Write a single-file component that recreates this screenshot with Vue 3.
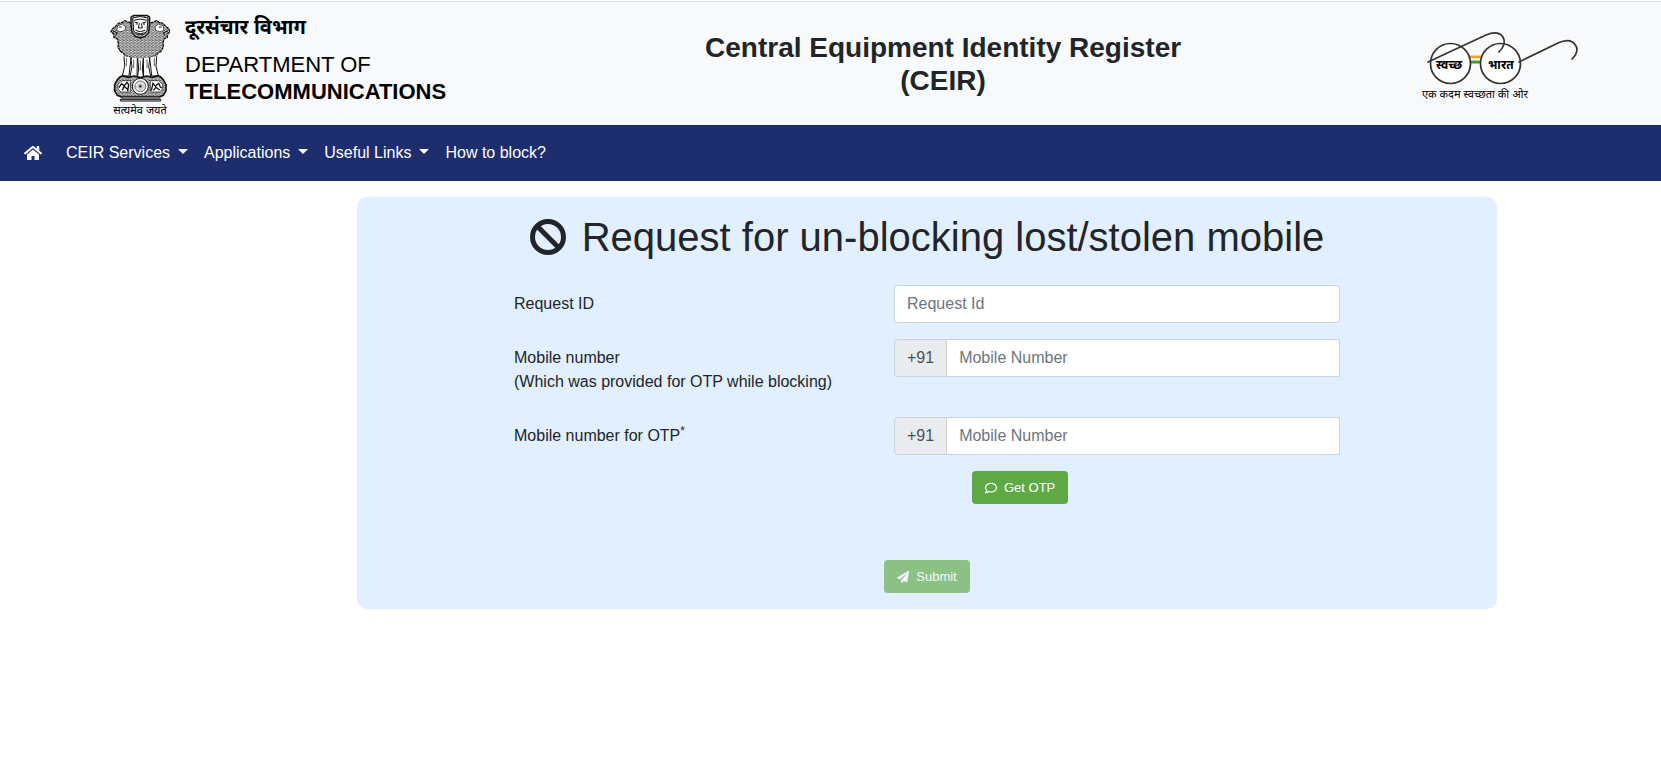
<template>
  <div class="page">
    <header class="masthead">
      <div class="brand">
        <div class="emblem">
          <svg class="emblem-art" viewBox="30 24 180 264" aria-hidden="true">
            <defs>
              <pattern id="fur" width="11" height="10" patternUnits="userSpaceOnUse">
                <rect width="11" height="10" fill="#fff" />
                <path d="M0 1l5 4l6-4M0 6l5 4l6-4M3 0v4" fill="none" stroke="#111" stroke-width="2" />
              </pattern>
            </defs>
            <g fill="url(#fur)" stroke="#111" stroke-width="4" stroke-linejoin="round">
              <path d="M91 50l-10-3l-7-3l-7 5l-12 3l-8 9l-9 7l-5 9l8 7l1 10l10 5l3 12l-1 12l7 13l9 5l6 9l15 3l12 6h38l12-6l15-3l6-9l9-5l7-13l-1-12l3-12l10-5l1-10l8-7l-5-9l-9-7l-8-9l-12-3l-7-5l-7 3l-8 3z" stroke-dasharray="9 2" />
              <path d="M93 33l8-5h40l8 5v22l-3 25l-10 11l-15 5l-15-5l-10-11l-3-25z" />
            </g>
            <g fill="#fff" stroke="#111" stroke-width="3">
              <path d="M98 36q22-9 46 0l-3 38l-9 11h-22l-9-11z" />
              <path d="M53 59l14-5l10 8l-2 11l-12 4l-13-3zM189 59l-14-5l-10 8l2 11l12 4l13-3z" stroke-width="2" />
              <path d="M72 151l2 30l-7 29h20l3-30l4-27M170 151l-2 30l7 29h-20l-3-30l-4-27M92 154l4 28l-7 34h22l1-59M150 154l-4 28l7 34h-22l-1-59M113 157l3 32l-5 31h20l-4-31l3-32" />
            </g>
            <g fill="none" stroke="#111" stroke-width="3">
              <path d="M103 48l12 3M139 48l-12 3M107 54h6M129 54h6M118 52l-3 14h12l-3-14M106 73q15 8 30 0M108 80q13 7 26 0M101 43q20-8 40 0M57 63h8M185 63h-8M38 75l14 5l-5 9M204 75l-14 5l5 9" />
              <path d="M79 156v24M101 160v26M141 160v26M163 156v24M121 163v30" stroke-width="2" />
            </g>
            <path d="M60 213l8-4l17 5l17-4l19 5l19-5l17 4l17-5l8 4l8 8l8 15v18l-8 14l-12 5H65l-13-5l-8-14v-18l8-15z" fill="url(#fur)" stroke="#111" stroke-width="5" />
            <path d="M66 224h25v34H63l-9-9v-15zM176 224h-25v34h28l9-9v-15z" fill="#fff" stroke="#111" stroke-width="2" />
            <path d="M57 245l7-11l9 5l8-10l5 7l-3 20M67 253l5-12l11 9M154 254l5-22l7 9l10-9l5 11l5 3M160 253l8-9l11 8" fill="none" stroke="#111" stroke-width="4" />
            <circle cx="121" cy="241" r="24" fill="#fff" stroke="#111" stroke-width="3" />
            <circle cx="121" cy="241" r="16" fill="none" stroke="#333" stroke-width="2" />
            <path d="M121 223v36M103 241h36M108 228l26 26M134 228l-26 26M114 224l14 34M128 224l-14 34M104 234l34 14M104 248l34-14" stroke="#555" stroke-width="1" />
            <circle cx="121" cy="241" r="3" fill="#111" />
            <path d="M64 271h115v5H64zM61 280h121v5H61z" fill="#ddd" stroke="#111" stroke-width="3" />
          </svg>
          <span class="emblem-motto" lang="hi">सत्यमेव जयते</span>
        </div>
        <div class="brand-text">
          <span class="brand-hindi" lang="hi">दूरसंचार विभाग</span>
          <span>DEPARTMENT OF</span>
          <strong>TELECOMMUNICATIONS</strong>
        </div>
      </div>

      <h2 class="title">Central Equipment Identity Register<br />(CEIR)</h2>

      <svg class="swachh" viewBox="0 -15 158 74" role="img" aria-label="स्वच्छ भारत">
        <path d="M50 15h11" stroke="#e9a52f" stroke-width="3" />
        <path d="M50 17.500h11" stroke="#fff" stroke-width="2" />
        <path d="M50 20h11" stroke="#4d9b36" stroke-width="3" />
        <g fill="#fff" stroke="#333" stroke-width="1.700">
          <circle cx="30.500" cy="21.500" r="20" />
          <circle cx="80.500" cy="21.500" r="20" />
        </g>
        <g fill="none" stroke="#333" stroke-width="1.700" stroke-linecap="round">
          <path d="M8 20L66 -7Q78 -12 83 -5Q87 2 79 10" />
          <path d="M99 20L138 1Q151 -5 156 4Q159 10 152 17" />
        </g>
        <text x="16" y="27" class="lens" lang="hi">स्वच्छ</text>
        <text x="68" y="27" class="lens" lang="hi">भारत</text>
        <text x="2" y="56" class="slogan" lang="hi">एक कदम स्वच्छता की ओर</text>
      </svg>
    </header>

    <nav class="navbar">
      <a href="#" class="nav-link home" aria-label="Home">
        <svg viewBox="0 0 576 512" aria-hidden="true">
          <path d="M280.400 148.300L96 300.100V464a16 16 0 0 0 16 16l112-.300a16 16 0 0 0 16-16V368a16 16 0 0 1 16-16h64a16 16 0 0 1 16 16v95.600a16 16 0 0 0 16 16.100L464 480a16 16 0 0 0 16-16V300L295.700 148.300a12.200 12.200 0 0 0-15.300 0zM571.600 251.500L488 182.600V44.100a12 12 0 0 0-12-12h-56a12 12 0 0 0-12 12v72.600L318.500 43a48 48 0 0 0-61 0L4.300 251.500a12 12 0 0 0-1.600 16.900l25.500 31a12 12 0 0 0 16.900 1.600L280.400 107.200a12.200 12.200 0 0 1 15.300 0l235.200 193.700a12 12 0 0 0 16.900-1.600l25.500-31a12 12 0 0 0-1.700-16.800z" />
        </svg>
      </a>
      <a v-for="item in navItems" :key="item.label" href="#" class="nav-link">
        {{ item.label }}<span v-if="item.dropdown" class="caret"></span>
      </a>
    </nav>

    <main>
      <form class="card" @submit.prevent>
        <h1>
          <svg viewBox="0 0 36 36" aria-hidden="true">
            <circle cx="18" cy="18" r="15.500" />
            <path d="M7.500 7.500l21 21" />
          </svg>
          Request for un-blocking lost/stolen mobile
        </h1>

        <div class="fields">
          <label for="request-id">Request ID</label>
          <div class="group">
            <input id="request-id" v-model="requestId" type="text" class="rounded" placeholder="Request Id" />
          </div>

          <label for="mobile">Mobile number<br />(Which was provided for OTP while blocking)</label>
          <div class="group">
            <span class="prefix">+91</span>
            <input id="mobile" v-model="mobile" type="tel" placeholder="Mobile Number" />
          </div>

          <label for="otp-mobile">Mobile number for OTP<sup>*</sup></label>
          <div class="group">
            <span class="prefix">+91</span>
            <input id="otp-mobile" v-model="otpMobile" type="tel" placeholder="Mobile Number" />
          </div>

          <button type="button" class="btn otp">
            <svg viewBox="0 0 512 512" aria-hidden="true">
              <path d="M256 32C114.600 32 0 125.100 0 240c0 47.600 19.900 91.200 52.900 126.300C38 405.700 7 439.100 6.500 439.500c-6.600 7-8.400 17.200-4.600 26S14.400 480 24 480c61.500 0 110-25.700 139.100-46.300C192 442.800 223.200 448 256 448c141.400 0 256-93.100 256-208S397.400 32 256 32zm0 368c-26.700 0-53.100-4.100-78.400-12.100l-22.700-7.200-19.500 13.800c-14.300 10.100-33.900 21.400-57.500 29 7.300-12.100 14.400-25.700 19.900-40.200l10.600-28.100-20.600-21.800C69.700 314.100 48 282.200 48 240c0-88.200 93.300-160 208-160s208 71.800 208 160-93.300 160-208 160z" />
            </svg>
            Get OTP
          </button>
        </div>

        <button type="submit" class="btn" disabled>
          <svg viewBox="0 0 512 512" aria-hidden="true">
            <path d="M476 3.200L12.500 270.600c-18.100 10.400-15.800 35.600 2.200 43.200L121 358.400l287.300-253.200c5.500-4.900 13.300 2.600 8.600 8.300L176 407v80.500c0 23.600 28.500 32.900 42.500 15.800L282 426l124.600 52.200c14.200 6 30.400-2.900 33-18.200l72-432C515 7.800 493.300-6.800 476 3.200z" />
          </svg>
          Submit
        </button>
      </form>
    </main>
  </div>
</template>

<script setup>
import { ref } from 'vue'

const navItems = [
  { label: 'CEIR Services', dropdown: true },
  { label: 'Applications', dropdown: true },
  { label: 'Useful Links', dropdown: true },
  { label: 'How to block?', dropdown: false }
]

const requestId = ref('')
const mobile = ref('')
const otpMobile = ref('')
</script>

<style>
body {
  margin: 0;
  background: #fff;
}
</style>

<style scoped>
.page {
  padding-top: 1px;
  font-family: "Liberation Sans", Arial, "Noto Sans Devanagari", "Noto Sans", sans-serif;
  font-size: 16px;
  line-height: 24px;
  color: #212529;
}

*,
*::before {
  box-sizing: border-box;
}

.masthead {
  display: flex;
  align-items: center;
  justify-content: space-between;
  min-height: 124px;
  padding: 0 83px 0 110px;
  border-top: 1px solid #dee2e6;
  background: #f8f9fb;
}

.brand {
  display: flex;
  align-items: center;
  gap: 15px;
  color: #000;
}

.emblem {
  display: flex;
  flex-direction: column;
  align-items: center;
  width: 60px;
  padding-top: 4px;
}

.emblem-art {
  width: 60px;
  height: 88px;
}

.emblem-motto {
  font-size: 11px;
  line-height: 16px;
  white-space: nowrap;
}

.brand-text {
  display: flex;
  flex-direction: column;
  padding-bottom: 8px;
  font-size: 22px;
  line-height: 27px;
}

.brand-hindi {
  margin-bottom: 10px;
  font-size: 20px;
  font-weight: 700;
}

.title {
  margin: 0;
  padding-left: 20px;
  font-size: 28px;
  line-height: 33px;
  text-align: center;
}

.swachh {
  width: 158px;
  height: 74px;
}

.lens {
  font-size: 12px;
  font-weight: 700;
}

.slogan {
  font-size: 11px;
}

.navbar {
  display: flex;
  align-items: center;
  min-height: 56px;
  padding: 0 16px;
  background: #1d2d6e;
}

.nav-link {
  display: flex;
  align-items: center;
  padding: 8px;
  color: #fff;
  text-decoration: none;
}

.home {
  margin-right: 8px;
}

.home svg {
  width: 18px;
  height: 16px;
  fill: #fff;
}

.caret {
  margin: 0 0 3px 8px;
  border: 5px solid transparent;
  border-top-color: #fff;
  border-bottom: 0;
}

main {
  padding: 16px 0 16px 193px;
}

.card {
  display: flex;
  flex-direction: column;
  align-items: center;
  max-width: 1140px;
  margin: 0 auto;
  padding: 16px;
  border-radius: 10px;
  background: #e1efff;
}

h1 {
  display: flex;
  align-items: center;
  gap: 16px;
  margin: 0 0 24px;
  font-size: 40px;
  font-weight: 400;
  line-height: 48px;
}

h1 svg {
  width: 36px;
  height: 36px;
  fill: none;
  stroke: #212529;
  stroke-width: 5;
}

.fields {
  display: grid;
  grid-template-columns: 350px 1fr;
  align-items: start;
  gap: 16px 30px;
  width: 100%;
  max-width: 826px;
  margin-bottom: 56px;
}

label {
  padding: 7px 0;
}

sup {
  font-size: 12px;
  line-height: 0;
}

.group {
  display: flex;
}

.prefix {
  padding: 6px 12px;
  border: 1px solid #ced4da;
  border-right: 0;
  border-radius: 4px 0 0 4px;
  background: #e9ecef;
  color: #495057;
}

input {
  flex: 1;
  min-width: 0;
  height: 38px;
  padding: 6px 12px;
  border: 1px solid #ced4da;
  border-radius: 0;
  background: #fff;
  color: #495057;
  font: inherit;
}

input.rounded {
  border-radius: 4px;
}

input::placeholder {
  color: #6c757d;
  opacity: 1;
}

.btn {
  display: flex;
  align-items: center;
  gap: 7px;
  height: 33px;
  padding: 0 13px;
  border: 0;
  border-radius: 4px;
  background: #5fa944;
  color: #fff;
  font-family: inherit;
  font-size: 13px;
}

.btn:disabled {
  opacity: 0.65;
}

.btn svg {
  width: 12px;
  height: 12px;
  fill: #fff;
}

.otp {
  grid-column: 2;
  justify-self: start;
  margin-left: 78px;
}
</style>
